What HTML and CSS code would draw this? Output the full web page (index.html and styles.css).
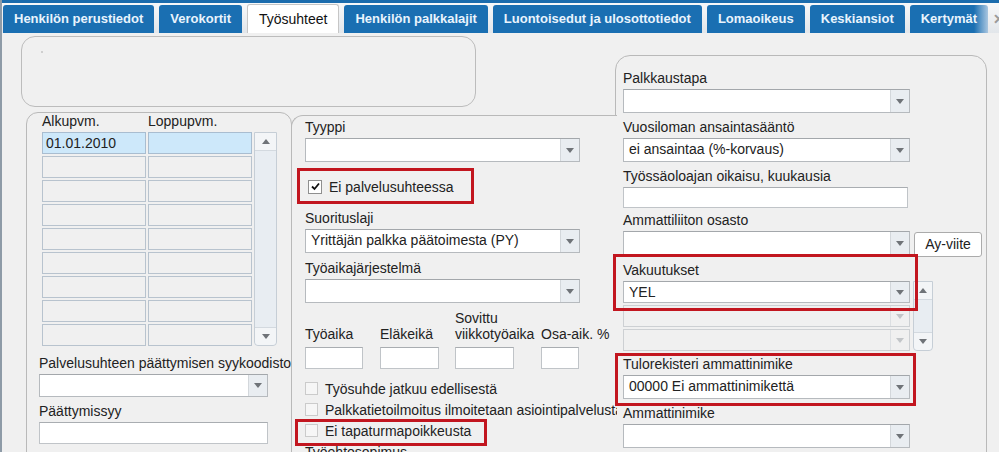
FILE: index.html
```html
<!DOCTYPE html>
<html lang="fi">
<head>
    <meta charset="UTF-8">
    <title>Työsuhteet</title>
    <link rel="stylesheet" href="styles.css">
</head>
<body>
<div class="app">
    <div class="tabbar">
        <div class="tab">Henkilön perustiedot</div>
        <div class="tab">Verokortit</div>
        <div class="tab active">Työsuhteet</div>
        <div class="tab">Henkilön palkkalajit</div>
        <div class="tab">Luontoisedut ja ulosottotiedot</div>
        <div class="tab">Lomaoikeus</div>
        <div class="tab">Keskiansiot</div>
        <div class="tab last">Kertymät</div>
        <div class="tab-close">&#10005;</div>
    </div>

    <div class="content">
        <div class="col-main">
            <div class="info-box"><span class="dot"></span></div>

            <div class="lower">
                <!-- employment periods -->
                <div class="panel panel-left">
                    <div class="grid-head"><span>Alkupvm.</span><span>Loppupvm.</span></div>
                    <div class="date-grid">
                        <div class="vscroll"><span class="sb-btn up"></span><span class="sb-btn down"></span></div>
                        <div class="cell sel">01.01.2010</div><div class="cell sel"></div>
                        <div class="cell"></div><div class="cell"></div>
                        <div class="cell"></div><div class="cell"></div>
                        <div class="cell"></div><div class="cell"></div>
                        <div class="cell"></div><div class="cell"></div>
                        <div class="cell"></div><div class="cell"></div>
                        <div class="cell"></div><div class="cell"></div>
                        <div class="cell"></div><div class="cell"></div>
                        <div class="cell"></div><div class="cell"></div>
                    </div>
                    <div class="field gap-l">
                        <label class="lbl">Palvelusuhteen päättymisen syykoodisto</label>
                        <div class="select"><span class="val"></span><span class="drop"></span></div>
                    </div>
                    <div class="field">
                        <label class="lbl">Päättymissyy</label>
                        <div class="input"></div>
                    </div>
                </div>

                <!-- employment details -->
                <div class="panel panel-mid">
                    <div class="field">
                        <label class="lbl">Tyyppi</label>
                        <div class="select"><span class="val"></span><span class="drop"></span></div>
                    </div>
                    <div class="check inset first">
                        <span class="cb on"><svg width="11" height="11" viewBox="0 0 11 11"><path d="M2 5.5 L4.5 8 L9 2.5" fill="none" stroke="#111" stroke-width="1.8"/></svg></span>
                        Ei palvelusuhteessa
                    </div>
                    <div class="field gap-m">
                        <label class="lbl">Suorituslaji</label>
                        <div class="select"><span class="val">Yrittäjän palkka päätoimesta (PY)</span><span class="drop"></span></div>
                    </div>
                    <div class="field gap-s">
                        <label class="lbl">Työaikajärjestelmä</label>
                        <div class="select"><span class="val"></span><span class="drop"></span></div>
                    </div>
                    <div class="small-row">
                        <div class="sf"><label class="lbl">Työaika</label><div class="input w58"></div></div>
                        <div class="sf"><label class="lbl">Eläkeikä</label><div class="input w59"></div></div>
                        <div class="sf"><label class="lbl">Sovittu<br>viikkotyöaika</label><div class="input w59"></div></div>
                        <div class="sf"><label class="lbl">Osa-aik. %</label><div class="input w38"></div></div>
                    </div>
                    <div class="checks">
                        <div class="check"><span class="cb"></span>Työsuhde jatkuu edellisestä</div>
                        <div class="check"><span class="cb"></span>Palkkatietoilmoitus ilmoitetaan asiointipalvelusta</div>
                        <div class="check"><span class="cb"></span>Ei tapaturmapoikkeusta</div>
                    </div>
                    <label class="lbl after">Työehtosopimus</label>
                </div>
            </div>
        </div>

        <!-- salary settings -->
        <div class="panel panel-right">
            <div class="field">
                <label class="lbl">Palkkaustapa</label>
                <div class="select"><span class="val"></span><span class="drop"></span></div>
            </div>
            <div class="field">
                <label class="lbl">Vuosiloman ansaintasääntö</label>
                <div class="select"><span class="val">ei ansaintaa (%-korvaus)</span><span class="drop"></span></div>
            </div>
            <div class="field">
                <label class="lbl">Työssäoloajan oikaisu, kuukausia</label>
                <div class="input"></div>
            </div>
            <div class="field tight">
                <label class="lbl">Ammattiliiton osasto</label>
                <div class="row">
                    <div class="select"><span class="val"></span><span class="drop"></span></div>
                    <div class="btn">Ay-viite</div>
                </div>
            </div>
            <div class="field mid">
                <label class="lbl">Vakuutukset</label>
                <div class="row">
                    <div class="list">
                        <div class="select"><span class="val">YEL</span><span class="drop"></span></div>
                        <div class="select off"><span class="val"></span><span class="drop"></span></div>
                        <div class="select off"><span class="val"></span><span class="drop"></span></div>
                    </div>
                    <div class="vscroll small"><span class="sb-btn up"></span><span class="sb-btn down"></span></div>
                </div>
            </div>
            <div class="field mid">
                <label class="lbl">Tulorekisteri ammattinimike</label>
                <div class="select"><span class="val">00000 Ei ammattinimikettä</span><span class="drop"></span></div>
            </div>
            <div class="field">
                <label class="lbl">Ammattinimike</label>
                <div class="select"><span class="val"></span><span class="drop"></span></div>
            </div>
        </div>
    </div>

    <!-- red highlight frames drawn over the form -->
    <div class="mark m1"></div>
    <div class="mark m2"></div>
    <div class="mark m3"></div>
    <div class="mark m4"></div>
</div>
</body>
</html>
```

FILE: styles.css
```css
* {
    box-sizing: border-box;
}
body {
    margin: 0;
    background: #f0f0f0;
    font-family: 'Liberation Sans', Arial, sans-serif;
    font-size: 14px;
    color: #222;
}
.app {
    position: relative;
    width: 999px;
    height: 452px;
    overflow: hidden;
    border-left: 2px solid #8e9ba7;
}

/* tabs */
.tabbar {
    display: flex;
    align-items: flex-end;
    gap: 5px;
    height: 33px;
    padding-left: 1px;
    border-top: 3px solid #1b6cad;
    background: linear-gradient(#f7f8f9, #e2e6ea);
    overflow: hidden;
}
.tab {
    flex-shrink: 0;
    height: 28px;
    padding: 0 11px;
    line-height: 28px;
    background: #1a6fb2;
    color: #e9f4fd;
    font-size: 13px;
    font-weight: bold;
    border-radius: 3px 3px 0 0;
    white-space: nowrap;
}
.tab.active {
    height: 29px;
    line-height: 28px;
    background: #fff;
    color: #111;
    font-size: 14px;
    font-weight: normal;
    border: 1px solid #c6c6c6;
    border-bottom: none;
}
.tab.last {
    background: linear-gradient(to right, #1a6fb2 82%, #a9c6e0);
}
.tab-close {
    flex-shrink: 0;
    height: 28px;
    line-height: 28px;
    color: #9a9a9a;
    font-size: 14px;
    font-weight: bold;
}

/* layout */
.content {
    display: flex;
    align-items: flex-start;
    height: 419px;
}
.col-main {
    flex-shrink: 0;
    width: 595px;
    margin-left: 19px;
}
.info-box {
    width: 455px;
    height: 71px;
    margin-top: 3px;
    padding: 14px 0 0 19px;
    border: 1px solid #bcbcbc;
    border-radius: 14px;
}
.dot {
    display: block;
    width: 2px;
    height: 2px;
    background: #cfcfcf;
}
.lower {
    display: flex;
    align-items: flex-start;
    margin-top: 5px;
}
.panel {
    flex-shrink: 0;
    border: 1px solid #b9b9b9;
}
.panel-left {
    position: relative;
    z-index: 2;
    width: 266px;
    height: 400px;
    margin-left: 5px;
    padding: 0 0 0 12px;
    border-radius: 12px 12px 0 0;
}
.panel-mid {
    position: relative;
    z-index: 1;
    width: 326px;
    height: 400px;
    margin: 3px 0 0 -1px;
    padding: 2px 0 0 13px;
    background: #f0f0f0;
    border-right: none;
    border-radius: 12px 0 0 0;
    overflow: hidden;
}
.panel-right {
    width: 372px;
    height: 420px;
    margin: 22px 0 0 -1px;
    padding: 13px 0 0 7px;
    border-radius: 15px 15px 0 0;
}

/* form parts */
.lbl {
    display: block;
    line-height: 18px;
    margin-bottom: 2px;
    white-space: nowrap;
}
.field {
    margin-top: 5px;
}
.field:first-child {
    margin-top: 0;
}
.field.tight {
    margin-top: 3px;
}
.field.mid {
    margin-top: 4px;
}
.field.gap-l {
    margin-top: 8px;
}
.field.gap-m {
    margin-top: 12px;
}
.field.gap-s {
    margin-top: 6px;
}
.row {
    display: flex;
    align-items: flex-start;
}
.select {
    display: flex;
    height: 24px;
    background: #fff;
    border: 1px solid #b6babe;
    border-top-color: #a3a7ab;
}
.panel-left .select {
    width: 229px;
    height: 23px;
}
.panel-mid .select {
    width: 275px;
}
.panel-right .select {
    width: 287px;
}
.val {
    flex: 1;
    padding-left: 5px;
    line-height: 21px;
    white-space: nowrap;
    overflow: hidden;
}
.drop {
    display: flex;
    align-items: center;
    justify-content: center;
    width: 19px;
    background: #e9edf1;
    border-left: 1px solid #d3d7db;
}
.drop::after {
    content: '';
    border-left: 4px solid transparent;
    border-right: 4px solid transparent;
    border-top: 5px solid #6f7378;
}
.select.off {
    background: #f0f0f0;
    border-color: #cdd0d3;
}
.select.off .drop {
    background: #f0f0f0;
    border-left-color: #dcdfe2;
}
.select.off .drop::after {
    border-top-color: #c2c5c8;
}
.input {
    height: 22px;
    background: #fff;
    border: 1px solid #c0c4c8;
    border-top-color: #a9adb1;
}
.panel-left .input {
    width: 229px;
}
.panel-right .input {
    width: 285px;
    height: 21px;
}
.btn {
    width: 68px;
    height: 25px;
    margin: 1px 0 0 4px;
    line-height: 23px;
    text-align: center;
    background: #fff;
    border: 1px solid #ababab;
    border-radius: 3px;
}

/* date grid */
.grid-head {
    display: flex;
    line-height: 16px;
    padding-left: 3px;
}
.grid-head span:first-child {
    width: 106px;
}
.date-grid {
    display: grid;
    grid-template-columns: 104px 104px 23px;
    grid-auto-rows: 22px;
    gap: 2px;
    margin: 3px 0 0 3px;
}
.cell {
    padding-left: 3px;
    line-height: 20px;
    background: #f0f0f0;
    border: 1px solid #b8c3ce;
}
.cell.sel {
    background: #cde8fa;
    border-color: #a9bdd0;
}
.vscroll {
    grid-column: 3;
    grid-row: 1 / span 9;
    display: flex;
    flex-direction: column;
    justify-content: space-between;
    background: #e8edf2;
    border: 1px solid #c6ced6;
    border-radius: 0 0 4px 4px;
}
.vscroll.small {
    width: 20px;
    height: 70px;
    margin-left: 3px;
}
.sb-btn {
    display: flex;
    align-items: center;
    justify-content: center;
    height: 18px;
    background: #f3f5f7;
}
.sb-btn.up {
    border-bottom: 1px solid #d3d9df;
}
.sb-btn.down {
    border-top: 1px solid #d3d9df;
    border-radius: 0 0 4px 4px;
}
.sb-btn.up::after {
    content: '';
    border-left: 4px solid transparent;
    border-right: 4px solid transparent;
    border-bottom: 5px solid #6f7378;
}
.sb-btn.down::after {
    content: '';
    border-left: 4px solid transparent;
    border-right: 4px solid transparent;
    border-top: 5px solid #6f7378;
}
.list {
    display: flex;
    flex-direction: column;
    gap: 2px;
}
.list .select {
    height: 22px;
}

/* middle column */
.small-row {
    display: grid;
    grid-template-columns: 75px 75px 86px 40px;
    align-items: end;
    margin-top: 7px;
}
.small-row .lbl {
    line-height: 16px;
    margin-bottom: 5px;
}
.w58 { width: 58px; }
.w59 { width: 59px; }
.w38 { width: 38px; }
.checks {
    margin-top: 9px;
}
.check {
    display: flex;
    align-items: center;
    height: 21px;
    white-space: nowrap;
}
.check.first {
    margin-top: 14px;
}
.check.inset {
    padding-left: 3px;
}
.cb {
    display: flex;
    align-items: center;
    justify-content: center;
    flex-shrink: 0;
    width: 13px;
    height: 13px;
    margin-right: 7px;
    background: #f6f6f6;
    border: 1px solid #cbcbcb;
}
.cb.on {
    width: 14px;
    height: 14px;
    background: #fff;
    border-color: #8f8f8f;
}
.lbl.after {
    margin-top: 2px;
}

/* highlight frames */
.mark {
    position: absolute;
    z-index: 5;
    border: 3px solid #c2161f;
}
.m1 { left: 295px; top: 168px; width: 177px; height: 36px; }
.m2 { left: 611px; top: 254px; width: 305px; height: 57px; }
.m3 { left: 613px; top: 353px; width: 301px; height: 53px; }
.m4 { left: 293px; top: 419px; width: 192px; height: 27px; }
```
